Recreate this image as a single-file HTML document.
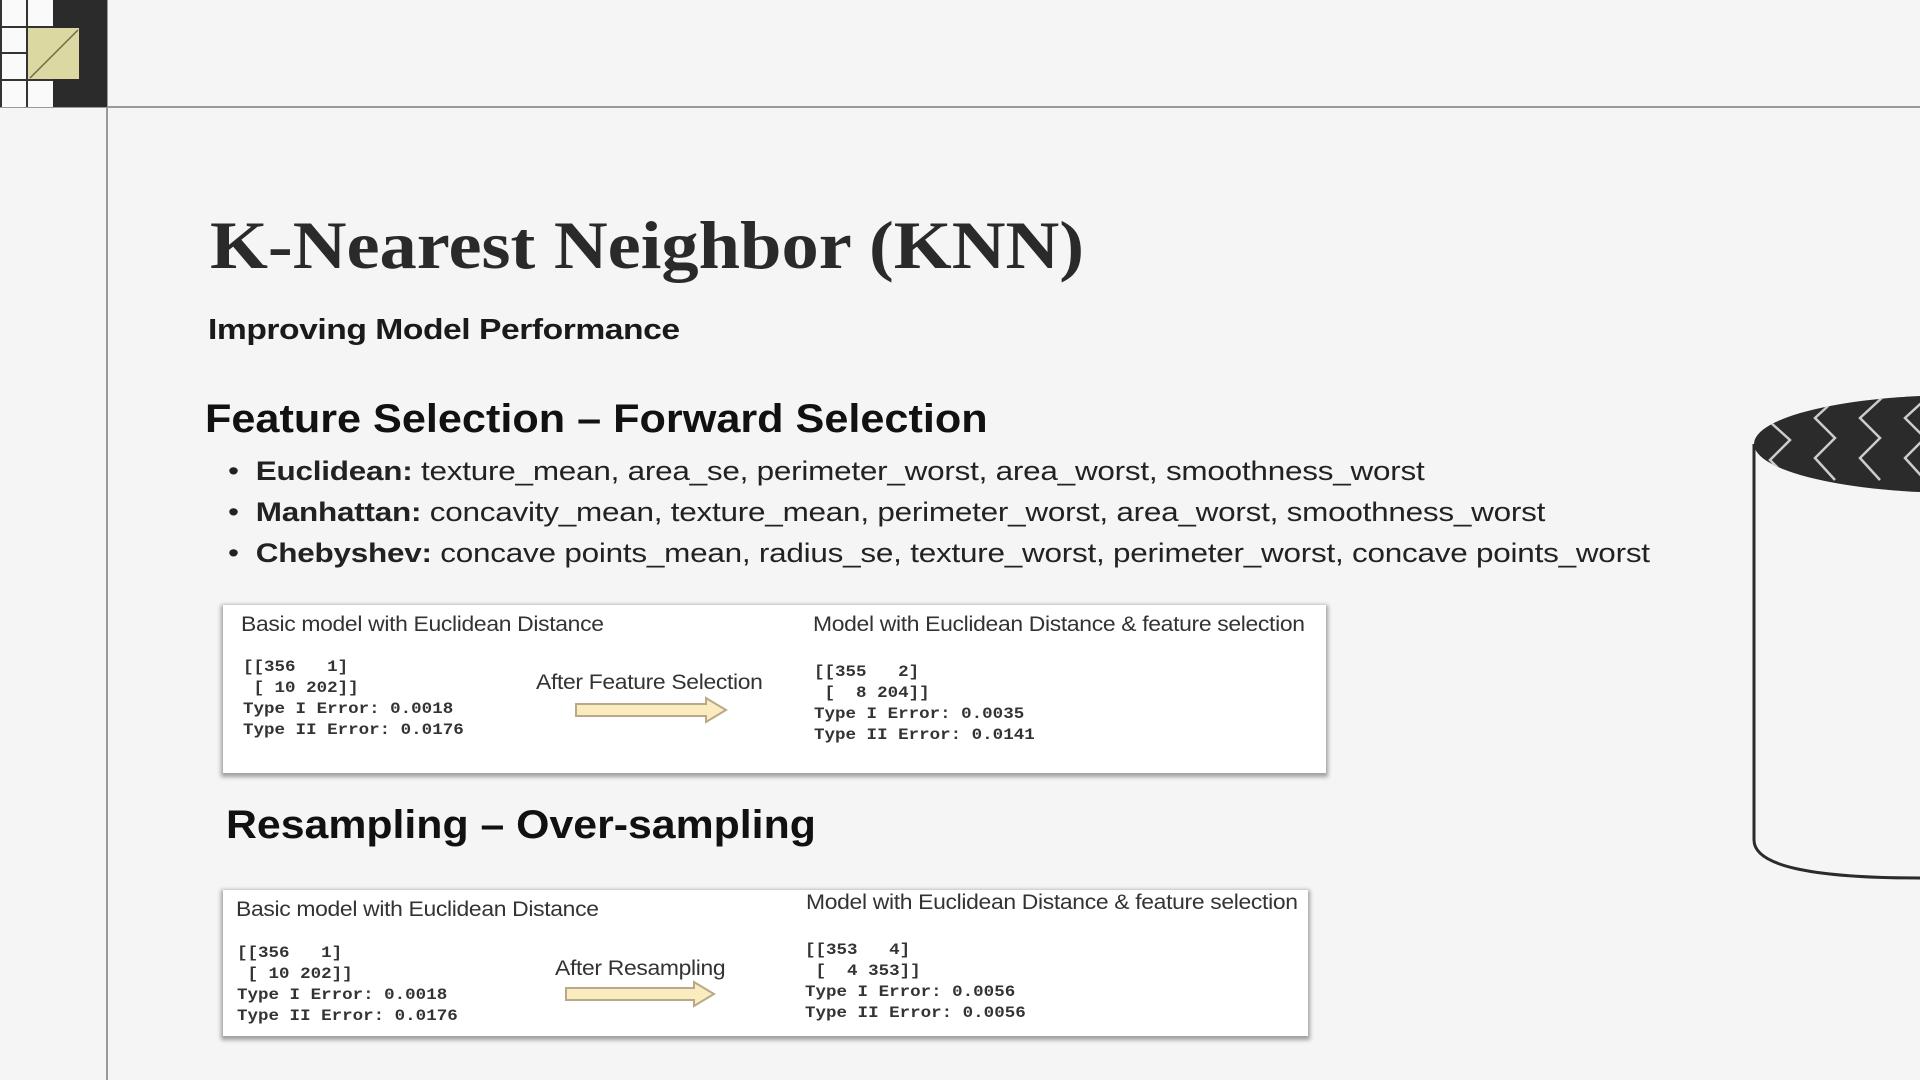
<!DOCTYPE html>
<html><head><meta charset="utf-8"><style>
*{margin:0;padding:0;box-sizing:border-box}
html,body{width:1920px;height:1080px;overflow:hidden}
body{background:#f5f5f5;position:relative;font-family:"Liberation Sans",sans-serif;color:#111}
.a{position:absolute;white-space:nowrap;transform-origin:left top}
.box{position:absolute;background:#fff;box-shadow:0 2px 4px 2px rgba(0,0,0,.35)}
.cap{font-size:21px;color:#333;letter-spacing:-0.3px;transform:scaleX(1.09)}
.mono{font-family:"Liberation Mono",monospace;font-weight:bold;font-size:15.5px;line-height:21px;color:#333;white-space:pre;transform:scaleX(1.13)}
</style></head><body>
<div class="a" style="left:0;top:106px;width:1920px;height:2px;background:#999"></div>
<div class="a" style="left:106px;top:0;width:2px;height:1080px;background:#999"></div>
<svg class="a" style="left:0;top:0" width="108" height="108">
<rect x="0" y="0" width="53" height="107" fill="#fafafa"/>
<g stroke="#333" stroke-width="2"><line x1="1" y1="0" x2="1" y2="107"/><line x1="27" y1="0" x2="27" y2="107"/><line x1="0" y1="27" x2="53" y2="27"/><line x1="0" y1="53" x2="53" y2="53"/><line x1="0" y1="80" x2="53" y2="80"/></g>
<rect x="53" y="0" width="54" height="107" fill="#2b2b2b"/>
<rect x="28" y="28" width="51" height="51" fill="#dcd8a2"/>
<line x1="30" y1="78" x2="78" y2="30" stroke="#6d6a4a" stroke-width="1.5"/>
</svg>
<div class="a" style="left:210px;top:206px;font-family:'Liberation Serif',serif;font-weight:bold;font-size:68px;color:#2a2a2a;transform:scaleX(1.095)">K-Nearest Neighbor (KNN)</div>
<div class="a" style="left:208px;top:314px;font-size:29px;font-weight:bold;color:#1a1a1a;letter-spacing:-0.4px;transform:scaleX(1.16)">Improving Model Performance</div>
<div class="a" style="left:205px;top:397px;font-size:40px;font-weight:bold;color:#111;transform:scaleX(1.08)">Feature Selection – Forward Selection</div>
<div class="a" style="left:228px;top:451px;font-size:27px;line-height:41px;color:#222;letter-spacing:-0.2px;transform:scaleX(1.165)">
<div>•&nbsp;&nbsp;<b>Euclidean:</b> texture_mean, area_se, perimeter_worst, area_worst, smoothness_worst</div>
<div>•&nbsp;&nbsp;<b>Manhattan:</b> concavity_mean, texture_mean, perimeter_worst, area_worst, smoothness_worst</div>
<div>•&nbsp;&nbsp;<b>Chebyshev:</b> concave points_mean, radius_se, texture_worst, perimeter_worst, concave points_worst</div>
</div>
<div class="box" style="left:223px;top:605px;width:1103px;height:168px"></div>
<div class="a cap" style="left:241px;top:613px">Basic model with Euclidean Distance</div>
<div class="a cap" style="left:813px;top:613px">Model with Euclidean Distance &amp; feature selection</div>
<div class="a mono" style="left:243px;top:657px">[[356   1]
 [ 10 202]]
Type I Error: 0.0018
Type II Error: 0.0176</div>
<div class="a cap" style="left:536px;top:671px">After Feature Selection</div>
<svg class="a" style="left:574px;top:696px" width="156" height="30"><path d="M2 8 H132 V2 L152 14 L132 26 V20 H2 Z" fill="#fbecc0" stroke="#b8a98a" stroke-width="2"/></svg>
<div class="a mono" style="left:814px;top:662px">[[355   2]
 [  8 204]]
Type I Error: 0.0035
Type II Error: 0.0141</div>
<div class="a" style="left:226px;top:803px;font-size:40px;font-weight:bold;color:#111;transform:scaleX(1.07)">Resampling – Over-sampling</div>
<div class="box" style="left:223px;top:890px;width:1085px;height:146px"></div>
<div class="a cap" style="left:236px;top:898px">Basic model with Euclidean Distance</div>
<div class="a cap" style="left:806px;top:891px">Model with Euclidean Distance &amp; feature selection</div>
<div class="a mono" style="left:237px;top:943px">[[356   1]
 [ 10 202]]
Type I Error: 0.0018
Type II Error: 0.0176</div>
<div class="a cap" style="left:555px;top:957px">After Resampling</div>
<svg class="a" style="left:564px;top:980px" width="156" height="30"><path d="M2 8 H130 V2 L150 14 L130 26 V20 H2 Z" fill="#fbecc0" stroke="#b8a98a" stroke-width="2"/></svg>
<div class="a mono" style="left:805px;top:940px">[[353   4]
 [  4 353]]
Type I Error: 0.0056
Type II Error: 0.0056</div>
<svg class="a" style="left:1740px;top:380px" width="180" height="510">
<defs><clipPath id="c"><ellipse cx="220" cy="64" rx="206" ry="49"/></clipPath></defs>
<path d="M14 64 V460 Q14 498 180 498" fill="none" stroke="#2b2b2b" stroke-width="3"/>
<ellipse cx="220" cy="64" rx="206" ry="49" fill="#2b2b2b"/>
<g clip-path="url(#c)" fill="none" stroke="#ccc" stroke-width="2.5">
<path d="M55 20 L30 42 L50 60 L30 80 L50 100"/>
<path d="M100 15 L75 38 L95 58 L75 78 L95 100"/>
<path d="M145 15 L120 38 L140 58 L120 78 L140 100"/>
<path d="M190 15 L165 38 L185 58 L165 78 L185 100"/>
</g>
</svg>
</body></html>
